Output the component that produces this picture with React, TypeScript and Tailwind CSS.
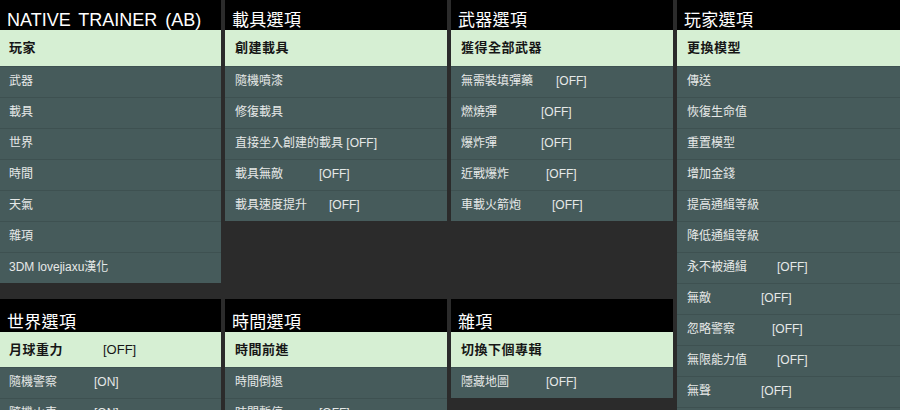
import React from "react";

type Item = { label: string; status?: string; w?: string };

const FONT = {
  fontFamily:
    '"Liberation Sans", "Noto Sans CJK TC", "Noto Sans CJK SC", sans-serif',
};

function Panel({
  title,
  highlight,
  items,
  top = true,
  latin = false,
  pad = "pl-[10px]",
}: {
  title: string;
  highlight: Item;
  items: Item[];
  top?: boolean;
  latin?: boolean;
  pad?: string;
}) {
  return (
    <div className="flex flex-col w-full">
      <div
        className={
          (top ? "h-[30px] " : "h-[33px] ") +
          "bg-black flex items-end pl-[7px] pb-[1px]"
        }
      >
        <span
          className={
            latin
              ? "text-[18px] leading-none text-white [word-spacing:3px]"
              : "text-[17px] leading-none text-white tracking-[0.3px]"
          }
        >
          {title}
        </span>
      </div>
      <div
        className={
          (top ? "h-[36px] " : "h-[35px] ") +
          "bg-[#d6efd3] flex items-center " +
          pad
        }
      >
        <span
          className={
            "text-[13px] font-bold text-[#161616] tracking-[0.5px] shrink-0 " +
            (highlight.w ?? "")
          }
        >
          {highlight.label}
        </span>
        {highlight.status && (
          <span className="text-[13px] text-[#161616]">{highlight.status}</span>
        )}
      </div>
      {items.map((it, i) => (
        <div
          key={i}
          className={
            "h-[31px] bg-[#465b5b] flex items-center pb-[2px] border-t border-[#3e5151] " +
            pad
          }
        >
          <span
            className={
              "text-[12px] text-[#e6e9e8] shrink-0 whitespace-pre " +
              (it.w ?? "")
            }
          >
            {it.label}
          </span>
          {it.status && (
            <span className="text-[12px] text-[#e6e9e8]">{it.status}</span>
          )}
        </div>
      ))}
    </div>
  );
}

export default function App() {
  return (
    <div
      style={FONT}
      className="w-[900px] h-[410px] overflow-hidden bg-[#2b2b2b] grid grid-cols-[221px_222px_222px_223px] gap-x-[4px]"
    >
      {/* Column 1 */}
      <div className="flex flex-col bg-[#2b2b2b]">
        <div className="h-[299px] shrink-0">
          <Panel
            title="NATIVE TRAINER (AB)"
            latin
            pad="pl-[9px]"
            highlight={{ label: "玩家" }}
            items={[
              { label: "武器" },
              { label: "載具" },
              { label: "世界" },
              { label: "時間" },
              { label: "天氣" },
              { label: "雜項" },
              { label: "3DM lovejiaxu漢化" },
            ]}
          />
        </div>
        <Panel
          top={false}
          pad="pl-[9px]"
          title="世界選項"
          highlight={{ label: "月球重力", status: "[OFF]", w: "w-[94px]" }}
          items={[
            { label: "隨機警察", status: "[ON]", w: "w-[85px]" },
            { label: "隨機火車", status: "[ON]", w: "w-[85px]" },
          ]}
        />
      </div>

      {/* Column 2 */}
      <div className="flex flex-col">
        <div className="h-[299px] shrink-0">
          <Panel
            title="載具選項"
            highlight={{ label: "創建載具" }}
            items={[
              { label: "隨機噴漆" },
              { label: "修復載具" },
              { label: "直接坐入創建的載具 ", status: "[OFF]" },
              { label: "載具無敵", status: "[OFF]", w: "w-[84px]" },
              { label: "載具速度提升", status: "[OFF]", w: "w-[94px]" },
            ]}
          />
        </div>
        <Panel
          top={false}
          title="時間選項"
          highlight={{ label: "時間前進" }}
          items={[
            { label: "時間倒退" },
            { label: "時間暫停", status: "[OFF]", w: "w-[84px]" },
          ]}
        />
      </div>

      {/* Column 3 */}
      <div className="flex flex-col">
        <div className="h-[299px] shrink-0">
          <Panel
            title="武器選項"
            highlight={{ label: "獲得全部武器" }}
            items={[
              { label: "無需裝填彈藥", status: "[OFF]", w: "w-[95px]" },
              { label: "燃燒彈", status: "[OFF]", w: "w-[80px]" },
              { label: "爆炸彈", status: "[OFF]", w: "w-[80px]" },
              { label: "近戰爆炸", status: "[OFF]", w: "w-[85px]" },
              { label: "車載火箭炮", status: "[OFF]", w: "w-[91px]" },
            ]}
          />
        </div>
        <Panel
          top={false}
          title="雜項"
          highlight={{ label: "切換下個專輯" }}
          items={[{ label: "隱藏地圖", status: "[OFF]", w: "w-[85px]" }]}
        />
      </div>

      {/* Column 4 */}
      <div className="flex flex-col bg-[#465b5b]">
        <Panel
          title="玩家選項"
          highlight={{ label: "更換模型" }}
          items={[
            { label: "傳送" },
            { label: "恢復生命值" },
            { label: "重置模型" },
            { label: "增加金錢" },
            { label: "提高通緝等級" },
            { label: "降低通緝等級" },
            { label: "永不被通緝", status: "[OFF]", w: "w-[90px]" },
            { label: "無敵", status: "[OFF]", w: "w-[74px]" },
            { label: "忽略警察", status: "[OFF]", w: "w-[85px]" },
            { label: "無限能力值", status: "[OFF]", w: "w-[90px]" },
            { label: "無聲", status: "[OFF]", w: "w-[74px]" },
            { label: "" },
          ]}
        />
      </div>
    </div>
  );
}
